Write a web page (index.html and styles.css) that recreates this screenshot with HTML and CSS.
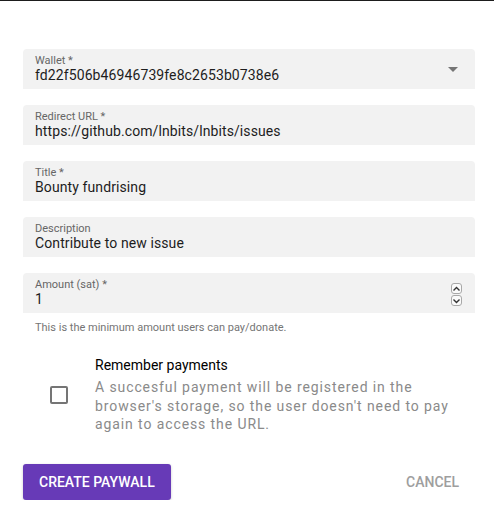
FILE: index.html
```html
<!DOCTYPE html>
<html>
<head>
<meta charset="utf-8">
<link rel="stylesheet" href="styles.css">
</head>
<body>
<div class="card">
  <form class="form">
    <div class="field">
      <div class="field-main">
        <div class="label">Wallet *</div>
        <div class="value">fd22f506b46946739fe8c2653b0738e6</div>
      </div>
      <svg class="caret" width="24" height="24" viewBox="0 0 24 24"><path d="M7 10l5 5 5-5z" fill="#757575"/></svg>
    </div>
    <div class="field">
      <div class="field-main">
        <div class="label">Redirect URL *</div>
        <div class="value">https://github.com/lnbits/lnbits/issues</div>
      </div>
    </div>
    <div class="field">
      <div class="field-main">
        <div class="label">Title *</div>
        <div class="value">Bounty fundrising</div>
      </div>
    </div>
    <div class="field">
      <div class="field-main">
        <div class="label">Description</div>
        <div class="value">Contribute to new issue</div>
      </div>
    </div>
    <div class="field-wrap">
      <div class="field">
        <div class="field-main">
          <div class="label">Amount (sat) *</div>
          <div class="value">1</div>
        </div>
        <div class="spin">
          <span class="spin-btn"><svg width="9" height="6" viewBox="0 0 9 6"><path d="M1.5 4.5L4.5 1.5L7.5 4.5" fill="none" stroke="#333" stroke-width="1.4"/></svg></span>
          <span class="spin-btn"><svg width="9" height="6" viewBox="0 0 9 6"><path d="M1.5 1.5L4.5 4.5L7.5 1.5" fill="none" stroke="#333" stroke-width="1.4"/></svg></span>
        </div>
      </div>
      <div class="hint">This is the minimum amount users can pay/donate.</div>
    </div>
    <div class="check-item">
      <div class="check-side"><span class="checkbox"></span></div>
      <div class="check-text">
        <div class="check-title">Remember payments</div>
        <div class="check-caption">A succesful payment will be registered in the browser's storage, so the user doesn't need to pay again to access the URL.</div>
      </div>
    </div>
    <div class="actions">
      <button type="button" class="btn-primary">CREATE PAYWALL</button>
      <button type="button" class="btn-flat">CANCEL</button>
    </div>
  </form>
</div>
</body>
</html>
```
FILE: styles.css
```css
html, body {
  margin: 0;
  padding: 0;
  background: #fff;
}
body {
  font-family: Roboto, "Noto Sans", sans-serif;
  color: #000;
  border-top: 1px solid #1d1d1d;
}
.card {
  padding: 48px 19px 0 23px;
}
.form {
  display: flex;
  flex-direction: column;
  gap: 16px;
}
.field {
  height: 40px;
  background: #f2f2f2;
  border-radius: 4px 4px 0 0;
  display: flex;
  align-items: center;
  padding: 0 12px;
}
.field-main {
  flex: 1;
  display: flex;
  flex-direction: column;
}
.label {
  font-size: 11px;
  line-height: 13px;
  color: #666;
}
.value {
  font-size: 14px;
  line-height: 17px;
  color: #1d1d1d;
  letter-spacing: 0.1px;
}
.caret {
  margin-right: -2px;
  margin-top: -1px;
}
.field-wrap {
  display: flex;
  flex-direction: column;
}
.hint {
  font-size: 11px;
  line-height: 13px;
  color: #757575;
  padding: 8px 12px 0;
}
.spin {
  display: flex;
  flex-direction: column;
  margin-right: 1px;
  margin-top: 4px;
}
.spin-btn {
  width: 11px;
  height: 11px;
  border: 1px solid #a8a8a8;
  border-radius: 3px;
  background: #fafafa;
  display: flex;
  align-items: center;
  justify-content: center;
  box-sizing: border-box;
  margin-bottom: 1px;
}
.check-item {
  display: flex;
  align-items: center;
  margin-top: -1px;
  padding: 7px 0;
}
.check-side {
  width: 72px;
  display: flex;
  justify-content: center;
}
.checkbox {
  width: 18px;
  height: 18px;
  border: 2px solid #757575;
  border-radius: 2px;
  box-sizing: border-box;
  margin-left: -1px;
}
.check-text {
  flex: 1;
}
.check-title {
  font-size: 14px;
  line-height: 19px;
  color: #000;
}
.check-caption {
  font-size: 14px;
  line-height: 18.5px;
  color: #8a8a8a;
  letter-spacing: 0.9px;
  margin-top: 3px;
  padding-right: 16px;
}
.actions {
  display: flex;
  justify-content: space-between;
  align-items: center;
  margin-top: 7px;
}
.btn-primary {
  background: #673ab7;
  color: #fff;
  border: none;
  border-radius: 3px;
  height: 36px;
  padding: 0 16px;
  font-family: Roboto, sans-serif;
  font-size: 14px;
  font-weight: 500;
  box-shadow: 0 1px 3px rgba(0,0,0,0.2);
}
.btn-flat {
  background: none;
  border: none;
  color: #9e9e9e;
  font-family: Roboto, sans-serif;
  font-size: 14px;
  font-weight: 500;
  height: 36px;
  padding: 0 16px;
}
```
